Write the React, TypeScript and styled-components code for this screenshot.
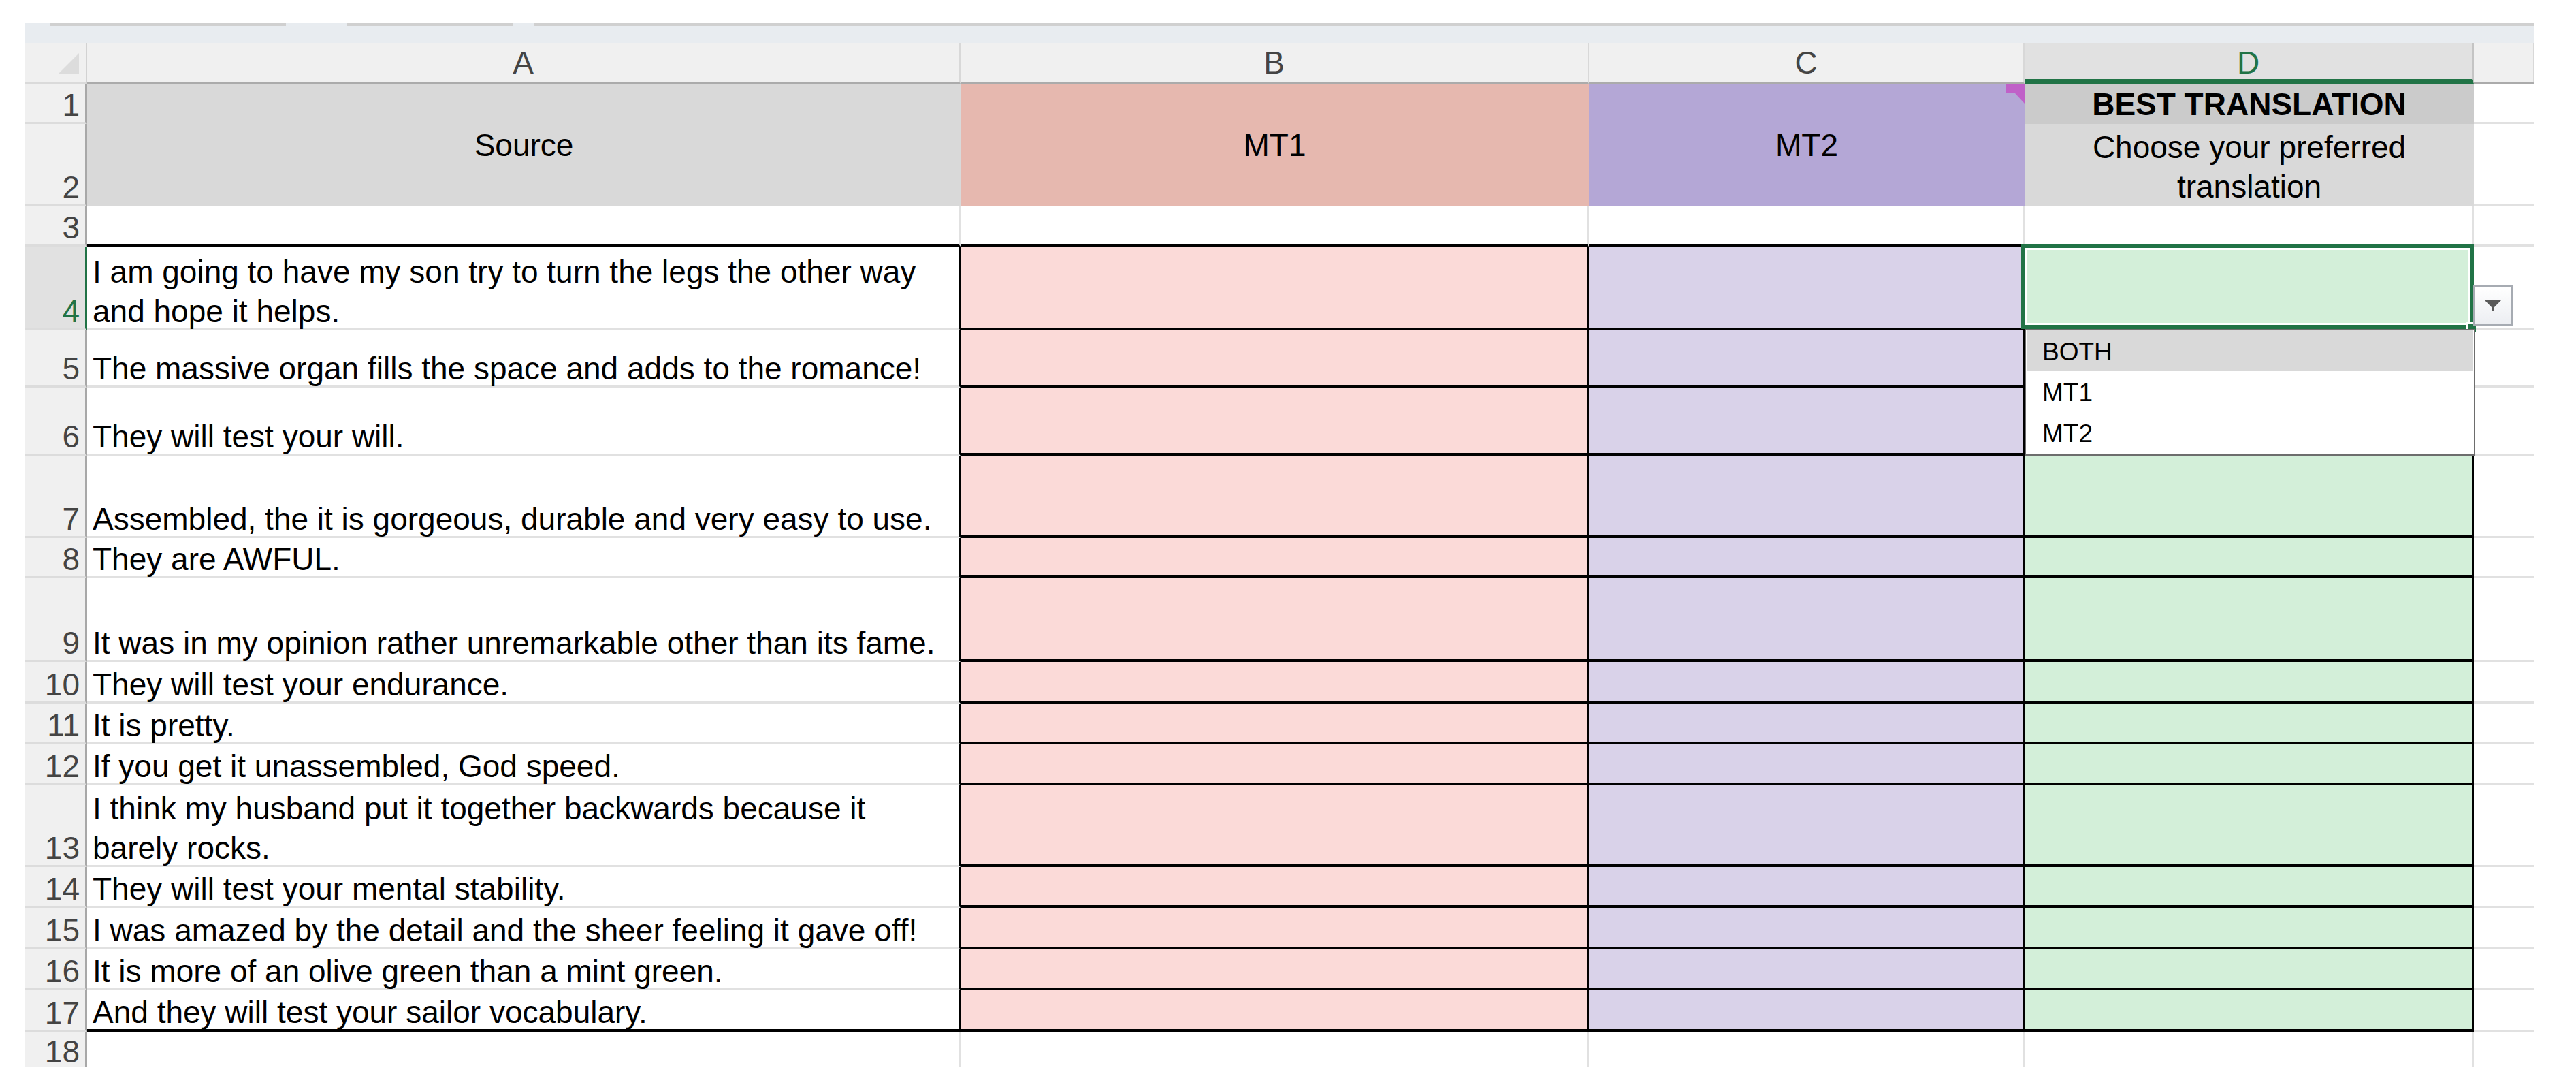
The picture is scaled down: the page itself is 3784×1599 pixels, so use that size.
import React from "react";
import styled, { createGlobalStyle } from "styled-components";

const GlobalStyle = createGlobalStyle`
  html, body {
    margin: 0;
    padding: 0;
    background: #ffffff;
  }
  body {
    font-family: "Liberation Sans", Arial, sans-serif;
  }
`;

const GREEN = "#217346";
const GRID = "3px solid #e1e1e1";
const BLACK_H = "4px solid #000000";
const BLACK_V = "3px solid #000000";

const FILL = {
  head: "#d9d9d9",
  headDark: "#cbcbcb",
  mt1Head: "#e6b8af",
  mt2Head: "#b4a7d6",
  mt1: "#fbdad8",
  mt2: "#d9d2e9",
  best: "#d3efd9",
};

type DataRow = { n: number; h: number; lines: string[] };

const dataRows: DataRow[] = [
  { n: 4, h: 123, lines: ["I am going to have my son try to turn the legs the other way", "and hope it helps."] },
  { n: 5, h: 84, lines: ["The massive organ fills the space and adds to the romance!"] },
  { n: 6, h: 100, lines: ["They will test your will."] },
  { n: 7, h: 121, lines: ["Assembled, the it is gorgeous, durable and very easy to use."] },
  { n: 8, h: 59, lines: ["They are AWFUL."] },
  { n: 9, h: 123, lines: ["It was in my opinion rather unremarkable other than its fame."] },
  { n: 10, h: 61, lines: ["They will test your endurance."] },
  { n: 11, h: 60, lines: ["It is pretty."] },
  { n: 12, h: 60, lines: ["If you get it unassembled, God speed."] },
  { n: 13, h: 120, lines: ["I think my husband put it together backwards because it", "barely rocks."] },
  { n: 14, h: 60, lines: ["They will test your mental stability."] },
  { n: 15, h: 61, lines: ["I was amazed by the detail and the sheer feeling it gave off!"] },
  { n: 16, h: 60, lines: ["It is more of an olive green than a mint green."] },
  { n: 17, h: 61, lines: ["And they will test your sailor vocabulary."] },
];

// the last row is cut by the window edge, so it only gets 52px
const rowTemplate = ["60px", "59px", "121px", "59px", ...dataRows.map((r) => `${r.h}px`), "52px"].join(" ");

const Page = styled.div`
  padding: 34px 0 0 37px;
  width: 3686px;
`;

const TopBand = styled.div`
  height: 29px;
  background: #e8ecf0;
`;

const TopRule = styled.div`
  display: flex;
  height: 4px;
`;

const RuleSegment = styled.div<{ $w?: number; $on?: boolean }>`
  flex: ${({ $w }) => ($w ? `0 0 ${$w}px` : "1 1 auto")};
  background: ${({ $on }) => ($on ? "#d0d0d0" : "transparent")};
`;

const Sheet = styled.div`
  display: grid;
  grid-template-columns: 91px 1283px 923px 640px 660px 89px;
  grid-template-rows: ${rowTemplate};
  color: #000;
`;

const Corner = styled.div`
  box-sizing: border-box;
  position: relative;
  background: #f0f0f0;
  border-right: 2px solid #d2d2d2;
  border-bottom: 3px solid #dadada;
  display: flex;
  justify-content: flex-end;
  align-items: flex-end;
  padding: 0 10px 11px 0;
`;

const ColHeader = styled.div<{ $active?: boolean }>`
  box-sizing: border-box;
  display: flex;
  align-items: center;
  justify-content: center;
  background: ${({ $active }) => ($active ? "#e1e1e1" : "#f0f0f0")};
  color: ${({ $active }) => ($active ? GREEN : "#444444")};
  border-right: ${({ $active }) => ($active ? "3px solid #c4c4c4" : "2px solid #d8d8d8")};
  border-bottom: ${({ $active }) => ($active ? `7px solid ${GREEN}` : "3px solid #ababab")};
  padding-top: ${({ $active }) => ($active ? "4px" : "0")};
  font-size: 46px;
  line-height: 58px;
`;

const RowHeader = styled.div<{ $active?: boolean; $last?: boolean }>`
  box-sizing: border-box;
  display: flex;
  align-items: flex-end;
  justify-content: flex-end;
  background: ${({ $active }) => ($active ? "#e1e1e1" : "#f0f0f0")};
  color: ${({ $active }) => ($active ? GREEN : "#444444")};
  border-right: 3px solid ${({ $active }) => ($active ? GREEN : "#a8a8a8")};
  border-bottom: ${({ $last }) => ($last ? "none" : "3px solid #dcdcdc")};
  font-size: 46px;
  line-height: 58px;
  padding-right: 8px;
`;

const Cell = styled.div<{
  $bg?: string;
  $bottom?: string;
  $right?: string;
  $center?: boolean;
  $middle?: boolean;
  $span?: number;
}>`
  box-sizing: border-box;
  position: relative;
  min-width: 0;
  display: flex;
  flex-direction: column;
  justify-content: ${({ $middle }) => ($middle ? "center" : "flex-end")};
  align-items: ${({ $center }) => ($center ? "center" : "flex-start")};
  text-align: ${({ $center }) => ($center ? "center" : "left")};
  padding: 0 8px;
  background: ${({ $bg }) => $bg ?? "#ffffff"};
  border-bottom: ${({ $bottom }) => $bottom ?? "none"};
  border-right: ${({ $right }) => $right ?? "none"};
  grid-row: ${({ $span }) => ($span ? `span ${$span}` : "auto")};
`;

const Text = styled.div<{ $bold?: boolean; $drop?: boolean; $tight?: boolean }>`
  font-size: 46px;
  line-height: ${({ $tight }) => ($tight ? "46px" : "58px")};
  font-weight: ${({ $bold }) => ($bold ? 700 : 400)};
  white-space: nowrap;
  margin-bottom: ${({ $drop }) => ($drop ? "-4px" : "0")};
`;

const CommentMark = styled.svg`
  position: absolute;
  top: 0;
  right: 0;
`;

const SelectionFrame = styled.div`
  position: absolute;
  top: -4px;
  left: -5px;
  right: -3px;
  bottom: -2px;
  border: 6px solid ${GREEN};
  box-shadow: inset 0 0 0 3px #ffffff;
  pointer-events: none;
  z-index: 2;
`;

const FillHandle = styled.div`
  position: absolute;
  right: -6px;
  bottom: -7px;
  width: 12px;
  height: 12px;
  background: ${GREEN};
  border-top: 3px solid #ffffff;
  border-left: 3px solid #ffffff;
  z-index: 3;
`;

const DropButton = styled.div`
  box-sizing: border-box;
  position: absolute;
  left: calc(100% + 2px);
  top: 57px;
  width: 58px;
  height: 59px;
  border: 2px solid #a6abb2;
  background: linear-gradient(#ffffff, #eceef2);
  display: flex;
  align-items: center;
  justify-content: center;
  z-index: 3;
`;

const DropList = styled.div`
  box-sizing: border-box;
  position: absolute;
  left: 0;
  top: calc(100% + 2px);
  width: 662px;
  height: 186px;
  border: 2px solid #6d6d6d;
  background: #ffffff;
  padding: 0 2px;
  display: flex;
  flex-direction: column;
  z-index: 4;
`;

const DropItem = styled.div<{ $hl?: boolean }>`
  box-sizing: border-box;
  height: 60px;
  display: flex;
  align-items: flex-end;
  padding: 0 0 7px 22px;
  background: ${({ $hl }) => ($hl ? "#d9d9d9" : "transparent")};
  font-size: 37px;
  line-height: 42px;
  color: #000;
`;

const SelectAllMark = () => (
  <svg width="31" height="31" viewBox="0 0 31 31">
    <polygon points="31,0 31,31 0,31" fill="#dcdcdc" />
  </svg>
);

const DropArrow = () => (
  <svg width="26" height="16" viewBox="0 0 26 16">
    <path d="M1 0 H25 L15 10 V15 H11 V10 Z" fill="#5a5a5a" />
  </svg>
);

const Dropdown = () => (
  <>
    <SelectionFrame />
    <FillHandle />
    <DropButton>
      <DropArrow />
    </DropButton>
    <DropList>
      <DropItem $hl>BOTH</DropItem>
      <DropItem>MT1</DropItem>
      <DropItem>MT2</DropItem>
    </DropList>
  </>
);

const App = () => {
  return (
    <>
      <GlobalStyle />
      <Page>
        <TopBand>
          <TopRule>
            <RuleSegment $w={36} />
            <RuleSegment $w={347} $on />
            <RuleSegment $w={90} />
            <RuleSegment $w={243} $on />
            <RuleSegment $w={32} />
            <RuleSegment $on />
          </TopRule>
        </TopBand>
        <Sheet>
          <Corner>
            <SelectAllMark />
          </Corner>
          <ColHeader>A</ColHeader>
          <ColHeader>B</ColHeader>
          <ColHeader>C</ColHeader>
          <ColHeader $active>D</ColHeader>
          <ColHeader />

          {/* rows 1-2: headings */}
          <RowHeader>
            <Text $drop>1</Text>
          </RowHeader>
          <Cell $span={2} $bg={FILL.head} $center $middle>
            <Text>Source</Text>
          </Cell>
          <Cell $span={2} $bg={FILL.mt1Head} $center $middle>
            <Text>MT1</Text>
          </Cell>
          <Cell $span={2} $bg={FILL.mt2Head} $center $middle>
            <Text>MT2</Text>
            <CommentMark width="28" height="29" viewBox="0 0 28 29">
              <polygon points="0,0 28,0 28,29 14,14 0,14" fill="#c060c8" />
            </CommentMark>
          </Cell>
          <Cell $bg={FILL.headDark} $center $middle>
            <Text $bold>BEST TRANSLATION</Text>
          </Cell>
          <Cell $bottom={GRID} />
          <RowHeader>
            <Text $drop>2</Text>
          </RowHeader>
          <Cell $bg={FILL.head} $center>
            <Text>Choose your preferred</Text>
            <Text>translation</Text>
          </Cell>
          <Cell $bottom={GRID} />

          {/* row 3: spacer */}
          <RowHeader>
            <Text $drop>3</Text>
          </RowHeader>
          <Cell $right={GRID} $bottom={BLACK_H} />
          <Cell $right={GRID} $bottom={BLACK_H} />
          <Cell $right={GRID} $bottom={BLACK_H} />
          <Cell $right={GRID} $bottom={BLACK_H} />
          <Cell $bottom={GRID} />

          {dataRows.map((row, i) => {
            const last = i === dataRows.length - 1;
            return (
              <React.Fragment key={row.n}>
                <RowHeader $active={row.n === 4}>
                  <Text $drop>{row.n}</Text>
                </RowHeader>
                <Cell $right={BLACK_V} $bottom={last ? BLACK_H : GRID}>
                  {row.lines.map((line, j) => (
                    <Text key={j} $drop={j === row.lines.length - 1}>
                      {line}
                    </Text>
                  ))}
                </Cell>
                <Cell $bg={FILL.mt1} $right={BLACK_V} $bottom={BLACK_H} />
                <Cell $bg={FILL.mt2} $right={BLACK_V} $bottom={BLACK_H} />
                <Cell $bg={FILL.best} $right={BLACK_V} $bottom={BLACK_H}>
                  {row.n === 4 && <Dropdown />}
                </Cell>
                <Cell $bottom={GRID} />
              </React.Fragment>
            );
          })}

          {/* row 18: empty, cut off by the window */}
          <RowHeader $last>
            <Text $tight>18</Text>
          </RowHeader>
          <Cell $right={GRID} />
          <Cell $right={GRID} />
          <Cell $right={GRID} />
          <Cell $right={GRID} />
          <Cell />
        </Sheet>
      </Page>
    </>
  );
};

export default App;
